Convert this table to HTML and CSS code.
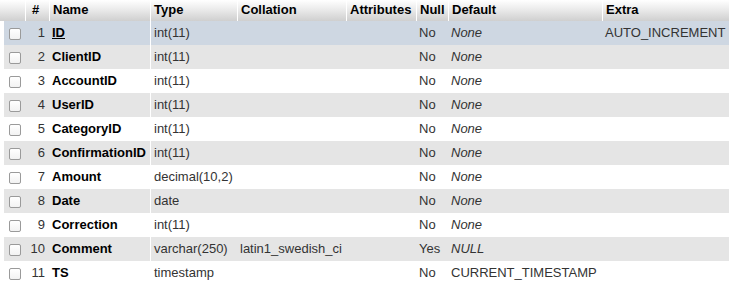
FILE: index.html
```html
<!DOCTYPE html>
<html>
<head>
<meta charset="utf-8">
<link rel="stylesheet" href="styles.css">
</head>
<body>
<table class="struct">
  <thead>
    <tr>
      <th class="c-chk"></th>
      <th class="c-num">#</th>
      <th class="c-name">Name</th>
      <th class="c-type">Type</th>
      <th class="c-coll">Collation</th>
      <th class="c-attr">Attributes</th>
      <th class="c-null">Null</th>
      <th class="c-def">Default</th>
      <th class="c-extra">Extra</th>
    </tr>
  </thead>
  <tbody>
    <tr class="marked">
      <td class="c-chk"><span class="box"></span></td><td class="c-num">1</td><td class="c-name"><span class="pk">ID</span></td><td class="c-type">int(11)</td><td></td><td></td><td class="c-null">No</td><td class="c-def"><i>None</i></td><td>AUTO_INCREMENT</td>
    </tr>
    <tr class="even">
      <td class="c-chk"><span class="box"></span></td><td class="c-num">2</td><td class="c-name">ClientID</td><td class="c-type">int(11)</td><td></td><td></td><td class="c-null">No</td><td class="c-def"><i>None</i></td><td></td>
    </tr>
    <tr>
      <td class="c-chk"><span class="box"></span></td><td class="c-num">3</td><td class="c-name">AccountID</td><td class="c-type">int(11)</td><td></td><td></td><td class="c-null">No</td><td class="c-def"><i>None</i></td><td></td>
    </tr>
    <tr class="even">
      <td class="c-chk"><span class="box"></span></td><td class="c-num">4</td><td class="c-name">UserID</td><td class="c-type">int(11)</td><td></td><td></td><td class="c-null">No</td><td class="c-def"><i>None</i></td><td></td>
    </tr>
    <tr>
      <td class="c-chk"><span class="box"></span></td><td class="c-num">5</td><td class="c-name">CategoryID</td><td class="c-type">int(11)</td><td></td><td></td><td class="c-null">No</td><td class="c-def"><i>None</i></td><td></td>
    </tr>
    <tr class="even">
      <td class="c-chk"><span class="box"></span></td><td class="c-num">6</td><td class="c-name">ConfirmationID</td><td class="c-type">int(11)</td><td></td><td></td><td class="c-null">No</td><td class="c-def"><i>None</i></td><td></td>
    </tr>
    <tr>
      <td class="c-chk"><span class="box"></span></td><td class="c-num">7</td><td class="c-name">Amount</td><td class="c-type">decimal(10,2)</td><td></td><td></td><td class="c-null">No</td><td class="c-def"><i>None</i></td><td></td>
    </tr>
    <tr class="even">
      <td class="c-chk"><span class="box"></span></td><td class="c-num">8</td><td class="c-name">Date</td><td class="c-type">date</td><td></td><td></td><td class="c-null">No</td><td class="c-def"><i>None</i></td><td></td>
    </tr>
    <tr>
      <td class="c-chk"><span class="box"></span></td><td class="c-num">9</td><td class="c-name">Correction</td><td class="c-type">int(11)</td><td></td><td></td><td class="c-null">No</td><td class="c-def"><i>None</i></td><td></td>
    </tr>
    <tr class="even">
      <td class="c-chk"><span class="box"></span></td><td class="c-num">10</td><td class="c-name">Comment</td><td class="c-type">varchar(250)</td><td>latin1_swedish_ci</td><td></td><td class="c-null">Yes</td><td class="c-def"><i>NULL</i></td><td></td>
    </tr>
    <tr>
      <td class="c-chk"><span class="box"></span></td><td class="c-num">11</td><td class="c-name">TS</td><td class="c-type">timestamp</td><td></td><td></td><td class="c-null">No</td><td class="c-def">CURRENT_TIMESTAMP</td><td></td>
    </tr>
  </tbody>
</table>
</body>
</html>
```
FILE: styles.css
```css
html, body {
  margin: 0;
  padding: 0;
  background: #fff;
}
body {
  font-family: "Liberation Sans", Arial, Helvetica, sans-serif;
  font-size: 13px;
  color: #333;
}
.struct {
  border-collapse: separate;
  border-spacing: 0;
  width: 729px;
  table-layout: fixed;
}
.struct th,
.struct td {
  box-sizing: border-box;
}
.struct th {
  height: 21px;
  padding: 0 3px 2px;
  text-align: left;
  font-weight: bold;
  color: #000;
  background: linear-gradient(to bottom, #ffffff 0%, #e6e6e6 55%, #cfcfcf 100%);
  border-left: 1px solid #fff;
  vertical-align: middle;
  white-space: nowrap;
}
.struct th.c-chk {
  border-left: none;
}
.struct th.c-num {
  padding-left: 6px;
}
.struct td {
  height: 24px;
  padding: 0 3px 2px;
  vertical-align: middle;
  white-space: nowrap;
  overflow: hidden;
}
.struct tbody tr.even td {
  background: #e5e5e5;
}
.struct tbody tr.marked td {
  background: #ced7e2;
}
.struct tbody td.c-chk {
  background: #fff !important;
  padding: 0 0 0 4px;
}
.struct td.c-chk .box {
  display: block;
  width: 21px;
  height: 24px;
  position: relative;
}
.struct tbody tr.even td.c-chk .box {
  background: #e5e5e5;
}
.struct tbody tr.marked td.c-chk .box {
  background: #ced7e2;
}
.struct td.c-chk .box::after {
  content: "";
  position: absolute;
  left: 5px;
  top: 7px;
  width: 10px;
  height: 10px;
  border: 1px solid #9a9a9a;
  border-radius: 2px;
  background: linear-gradient(#ffffff, #f2f2f2);
}
.c-chk { width: 25px; }
.c-num { width: 24px; }
.c-name { width: 101px; }
.c-type { width: 87px; }
.c-coll { width: 109px; }
.c-attr { width: 70px; }
.c-null { width: 32px; }
.c-def { width: 154px; }
.struct td.c-num {
  text-align: right;
  padding-right: 4px;
}
.struct td.c-name {
  font-weight: bold;
  color: #000;
}
.struct td.c-type {
  border-left: 1px solid #fff;
}
.pk {
  text-decoration: underline;
}
```
